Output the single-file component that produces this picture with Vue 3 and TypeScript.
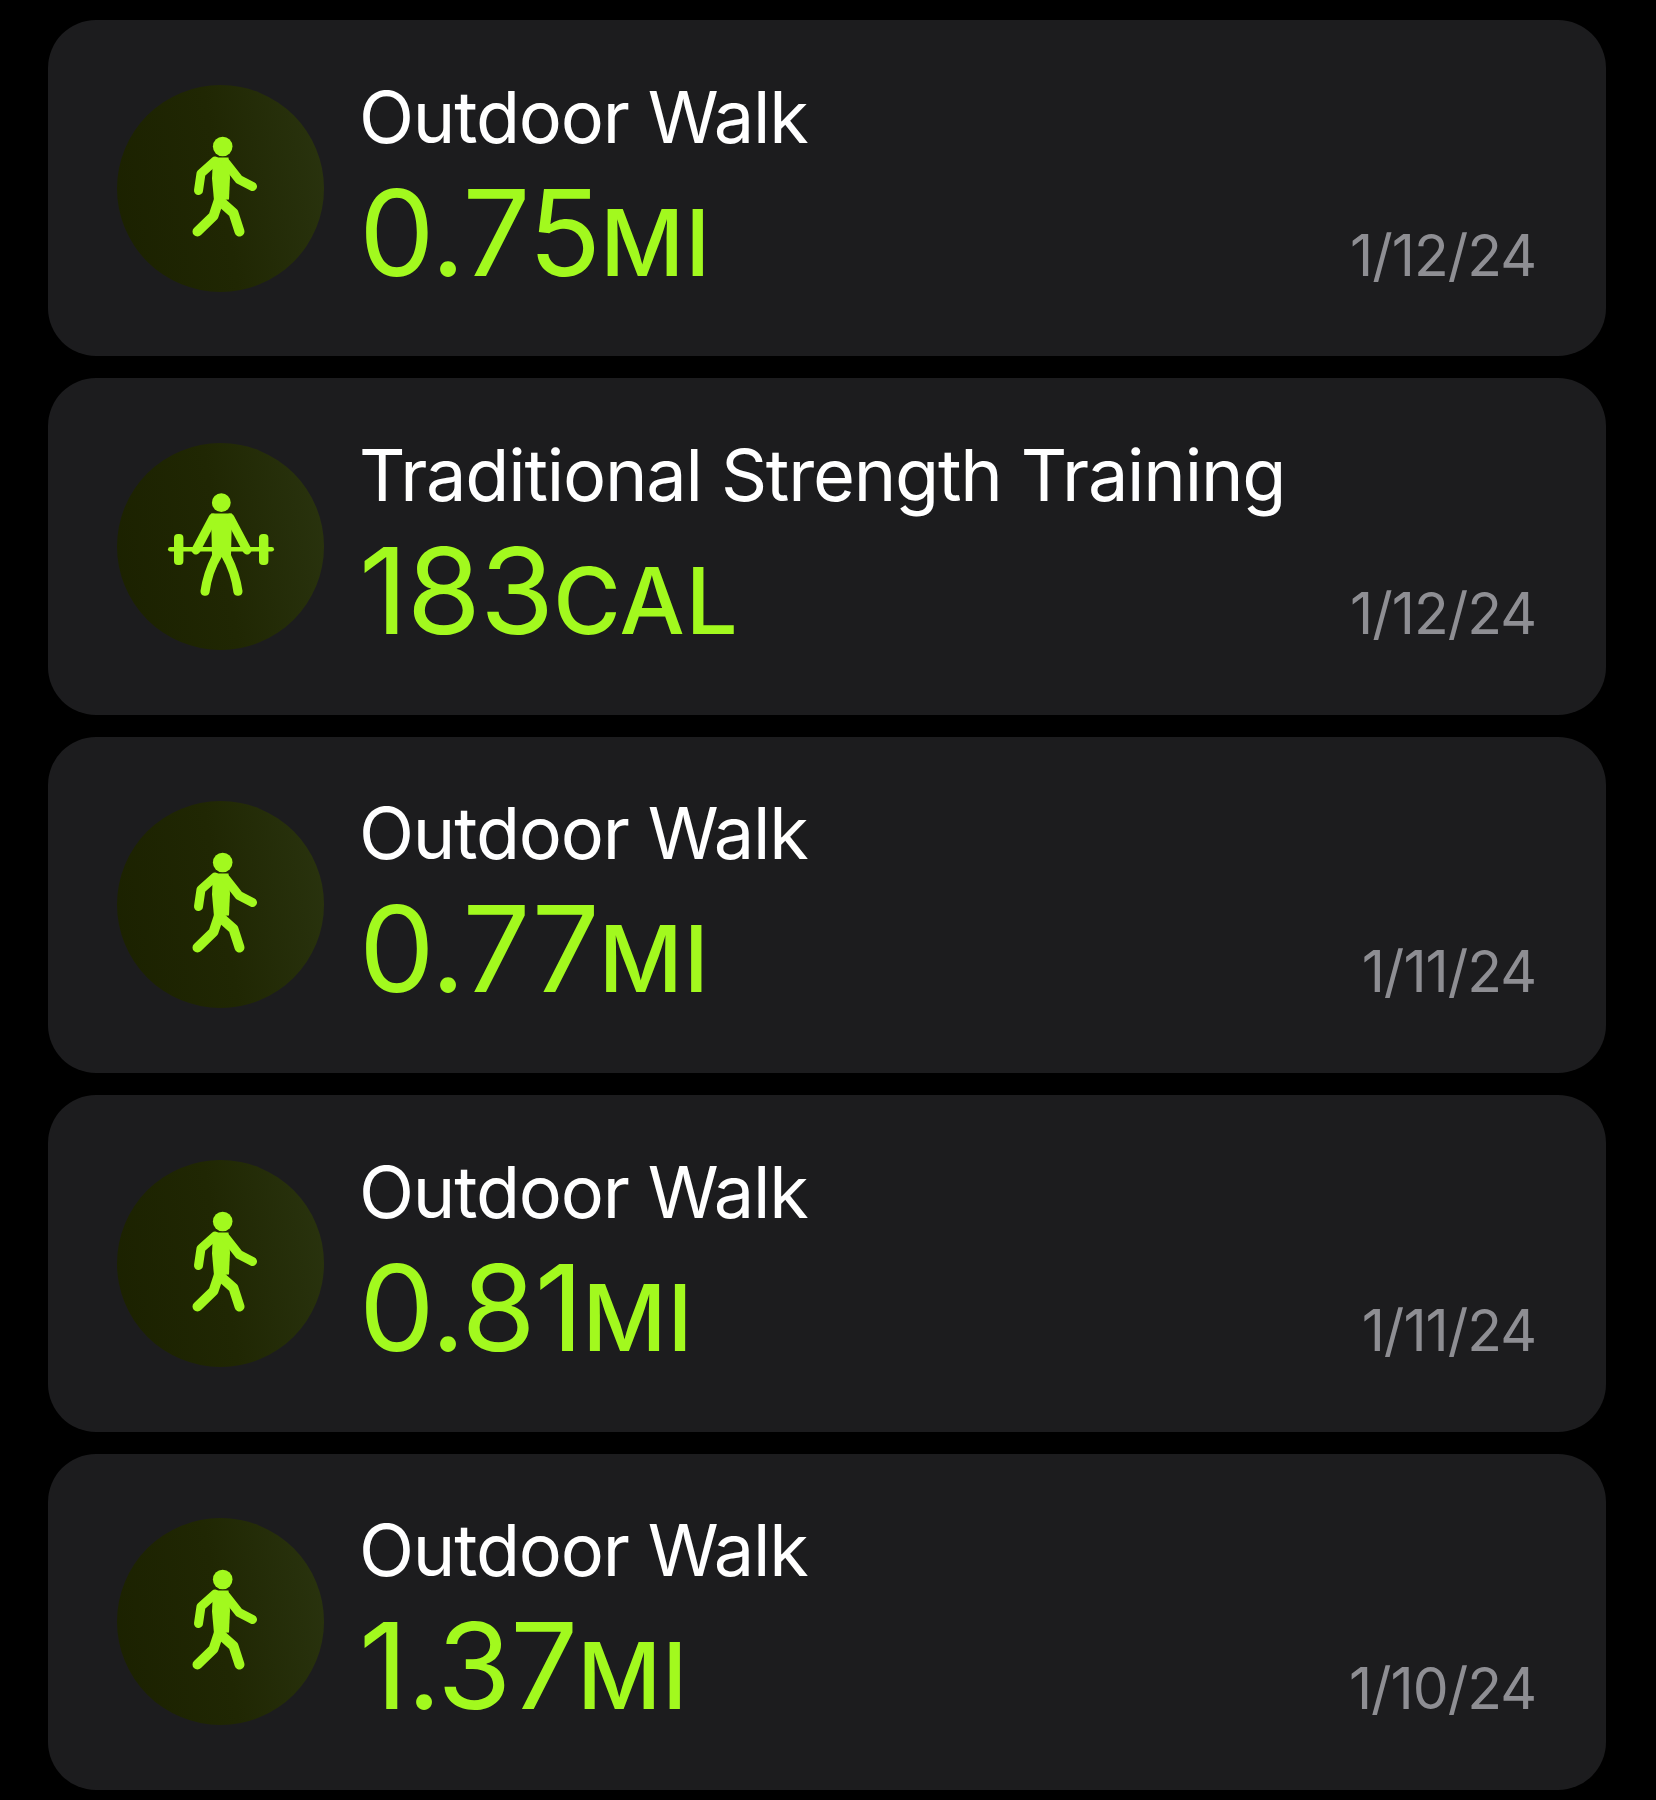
<script setup lang="ts">
interface Workout {
  title: string
  value: string
  unit: string
  date: string
  kind: 'walk' | 'strength'
}

const workouts: Workout[] = [
  { title: 'Outdoor Walk', value: '0.75', unit: 'MI', date: '1/12/24', kind: 'walk' },
  { title: 'Traditional Strength Training', value: '183', unit: 'CAL', date: '1/12/24', kind: 'strength' },
  { title: 'Outdoor Walk', value: '0.77', unit: 'MI', date: '1/11/24', kind: 'walk' },
  { title: 'Outdoor Walk', value: '0.81', unit: 'MI', date: '1/11/24', kind: 'walk' },
  { title: 'Outdoor Walk', value: '1.37', unit: 'MI', date: '1/10/24', kind: 'walk' },
]
</script>

<template>
  <main class="list">
    <article v-for="(w, i) in workouts" :key="i" class="card">
      <div class="badge">
        <svg v-if="w.kind === 'walk'" class="glyph" viewBox="0 0 207 207">
          <circle class="fill" cx="105.7" cy="61.5" r="9.8" />
          <path class="fill" d="M96 72.5h15.5l1.5 20-1 22-15 1-2-22z" />
          <path class="limb arm" d="M98 76 84 88.5 81.5 105.5" />
          <path class="limb arm" d="M109 78 122 94.5 135.5 101.5" />
          <path class="limb" d="M102.5 113 96.5 131 80.5 146.5" />
          <path class="limb" d="M103 116 116.5 128 122.5 146.5" />
        </svg>
        <svg v-else class="glyph" viewBox="0 0 207 207">
          <circle class="fill" cx="104.3" cy="59.7" r="9.4" />
          <rect class="fill" x="51" y="104" width="106" height="4.6" rx="2.3" />
          <rect class="fill" x="57" y="91" width="9.4" height="31" rx="4" />
          <rect class="fill" x="142" y="91" width="9.4" height="31" rx="4" />
          <path class="fill" d="M94 70.5H115L114 112Q123 130 125.5 148a4.6 4.6 0 0 1-9 1.5Q114 130 104.7 114 95 130 92.5 149.5a4.6 4.6 0 0 1-9-1.5Q86 130 95 112Z" />
          <path class="limb arm" d="M96 75 79 107" />
          <path class="limb arm" d="M113 75 130 107" />
        </svg>
      </div>
      <div class="body">
        <div class="title">{{ w.title }}</div>
        <div class="row">
          <span class="metric">{{ w.value }}<span class="unit">{{ w.unit }}</span></span>
          <span class="date">{{ w.date }}</span>
        </div>
      </div>
    </article>
  </main>
</template>

<style>
html,
body {
  background: #000;
}
</style>

<style scoped>
.list {
  display: flex;
  flex-direction: column;
  gap: 22px;
  padding: 20px 50px 10px 48px;
  height: 1800px;
  box-sizing: border-box;
  font-family: Inter, "Liberation Sans", sans-serif;
}

.card {
  display: flex;
  align-items: center;
  gap: 35px;
  height: 336.4px;
  padding: 0 70px 0 69px;
  box-sizing: border-box;
  background: #1c1c1e;
  border-radius: 48px;
}

.badge {
  flex: none;
  width: 207px;
  height: 207px;
  border-radius: 50%;
  background: linear-gradient(80deg, #1b2100 0%, #202703 50%, #2a340f 100%);
}

.glyph {
  display: block;
  width: 207px;
  height: 207px;
}

.fill {
  fill: #a2f91e;
}

.limb {
  fill: none;
  stroke: #a2f91e;
  stroke-width: 10;
  stroke-linecap: round;
  stroke-linejoin: round;
}

.arm {
  stroke-width: 9;
}

.body {
  flex: 1;
  min-width: 0;
}

.title {
  color: #fff;
  font-size: 72px;
  line-height: 90px;
  letter-spacing: -1.2px;
  font-weight: 400;
}

.row {
  display: flex;
  justify-content: space-between;
  align-items: baseline;
  margin-top: 9px;
}

.metric {
  color: #a2f91e;
  font-size: 120px;
  line-height: 124px;
  font-weight: 400;
  letter-spacing: -1px;
}

.unit {
  font-size: 92px;
  font-weight: 500;
  letter-spacing: 1px;
}

.date {
  color: #8e8e93;
  font-size: 57px;
  font-weight: 400;
  letter-spacing: -1px;
}
</style>
